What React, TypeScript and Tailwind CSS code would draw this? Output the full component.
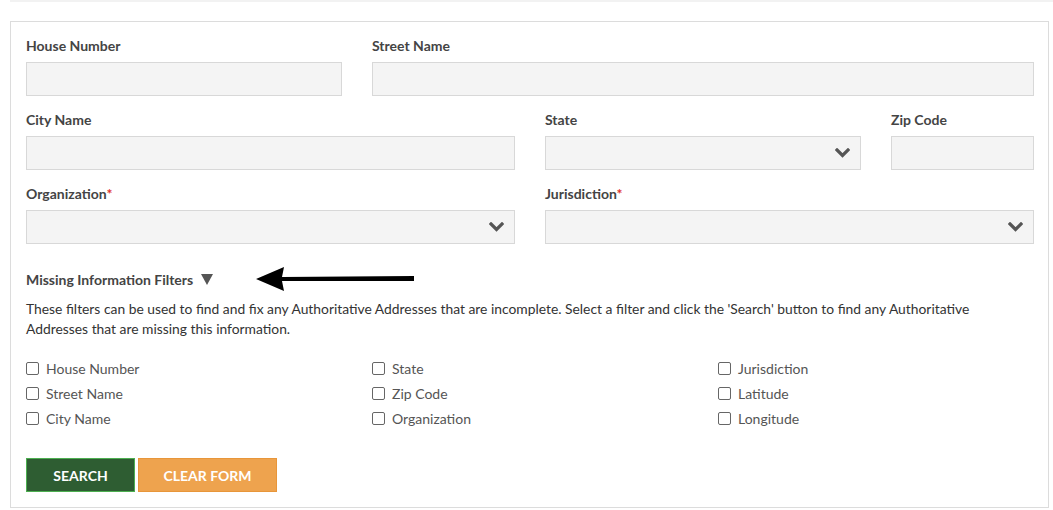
import React from 'react';

function Chevron() {
  return (
    <svg width="15" height="10" viewBox="0 0 15 10" className="shrink-0">
      <polyline points="2,2 7.5,7.5 13,2" fill="none" stroke="#555" strokeWidth="3.2" strokeLinecap="square" />
    </svg>
  );
}

function Field({ label, required, select, span }: { label: string; required?: boolean; select?: boolean; span: string }) {
  return (
    <div className={span}>
      <div className="text-[14px] leading-[20px] font-bold text-[#444] mb-[6px]">
        {label}
        {required && <span className="text-[#e0312c]">*</span>}
      </div>
      <div className="h-[34px] bg-[#f4f4f4] border border-[#d8d8d8] flex items-center justify-end pr-[10px]">
        {select && <Chevron />}
      </div>
    </div>
  );
}

function Check({ label }: { label: string }) {
  return (
    <div className="h-[25px] flex items-center">
      <span className="w-[13px] h-[13px] border border-[#666] rounded-[2px] bg-white" />
      <span className="ml-[7px] text-[14px] text-[#555]">{label}</span>
    </div>
  );
}

export default function App() {
  return (
    <div className="w-[1053px] h-[510px] bg-white" style={{ fontFamily: 'Lato, "Open Sans", sans-serif' }}>
      <div className="ml-[10px] h-[2px] bg-[#f2f2f2]" />
      <div className="ml-[10px] mt-[19px] w-[1039px] border border-[#dcdcdc] pl-[15px] pr-[13px] pt-[14px] pb-[15px]">
        <div className="grid grid-cols-12 gap-x-[30px] gap-y-[14px] w-[1008px]">
          <Field label="House Number" span="col-span-4" />
          <Field label="Street Name" span="col-span-8" />
          <Field label="City Name" span="col-span-6" />
          <Field label="State" select span="col-span-4" />
          <Field label="Zip Code" span="col-span-2" />
          <Field label="Organization" required select span="col-span-6" />
          <Field label="Jurisdiction" required select span="col-span-6" />
        </div>

        <div className="mt-[25px] h-[20px] flex items-center">
          <span className="text-[14px] font-bold text-[#444]">Missing Information Filters</span>
          <svg width="12" height="11" viewBox="0 0 12 11" className="ml-[8px]">
            <polygon points="0,0 12,0 6,11" fill="#555" />
          </svg>
          <svg width="158" height="26" viewBox="0 0 158 26" className="ml-[43px]">
            <polygon points="0,13 28,1 26,11 158,10 158,15 26,15 28,25" fill="#000" />
          </svg>
        </div>

        <p className="mt-[10px] text-[13.85px] leading-[20px] text-[#333] w-[1008px]">
          These filters can be used to find and fix any Authoritative Addresses that are incomplete. Select a filter and click the 'Search' button to find any Authoritative Addresses that are missing this information.
        </p>

        <div className="mt-[17px] grid grid-cols-3 w-[1038px]">
          <div>
            <Check label="House Number" />
            <Check label="Street Name" />
            <Check label="City Name" />
          </div>
          <div>
            <Check label="State" />
            <Check label="Zip Code" />
            <Check label="Organization" />
          </div>
          <div>
            <Check label="Jurisdiction" />
            <Check label="Latitude" />
            <Check label="Longitude" />
          </div>
        </div>

        <div className="mt-[27px] flex gap-[3px]">
          <button className="w-[109px] h-[34px] bg-[#2e5d32] border border-[#4caf50] text-white font-bold text-[14px] uppercase">
            Search
          </button>
          <button className="w-[139px] h-[34px] bg-[#eea34e] border border-[#e8963a] text-white font-bold text-[14px] uppercase">
            Clear Form
          </button>
        </div>
      </div>
    </div>
  );
}
